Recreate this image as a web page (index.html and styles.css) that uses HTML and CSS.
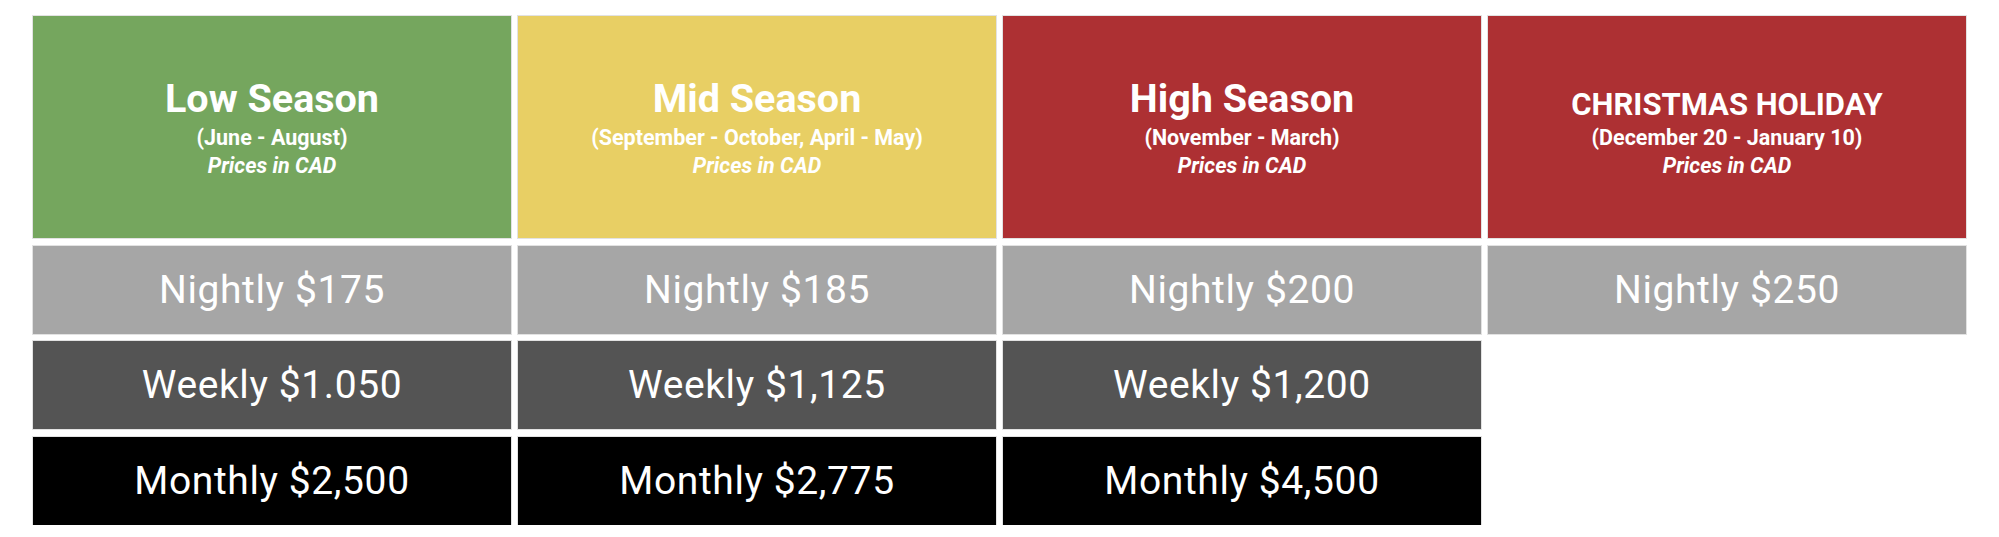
FILE: index.html
```html
<!DOCTYPE html>
<html lang="en">
<head>
<meta charset="utf-8">
<title>Seasonal Rates</title>
<link rel="stylesheet" href="styles.css">
</head>
<body>
<div class="rates">
  <div class="cell head low">
    <div class="title">Low Season</div>
    <div class="sub">(June - August)</div>
    <div class="sub note">Prices in CAD</div>
  </div>
  <div class="cell head mid">
    <div class="title">Mid Season</div>
    <div class="sub">(September - October, April - May)</div>
    <div class="sub note">Prices in CAD</div>
  </div>
  <div class="cell head high">
    <div class="title">High Season</div>
    <div class="sub">(November - March)</div>
    <div class="sub note">Prices in CAD</div>
  </div>
  <div class="cell head high">
    <div class="title caps">CHRISTMAS HOLIDAY</div>
    <div class="sub">(December 20 - January 10)</div>
    <div class="sub note">Prices in CAD</div>
  </div>

  <div class="cell price nightly">Nightly $175</div>
  <div class="cell price nightly">Nightly $185</div>
  <div class="cell price nightly">Nightly $200</div>
  <div class="cell price nightly">Nightly $250</div>

  <div class="cell price weekly">Weekly $1.050</div>
  <div class="cell price weekly">Weekly $1,125</div>
  <div class="cell price weekly">Weekly $1,200</div>
  <div class="empty"></div>

  <div class="cell price monthly">Monthly $2,500</div>
  <div class="cell price monthly">Monthly $2,775</div>
  <div class="cell price monthly">Monthly $4,500</div>
  <div class="empty"></div>
</div>
</body>
</html>
```
FILE: styles.css
```css
html, body {
  margin: 0;
  padding: 0;
  background: #ffffff;
}

body {
  font-family: Roboto, "Liberation Sans", sans-serif;
  color: #ffffff;
}

.rates {
  display: grid;
  grid-template-columns: repeat(4, 478px);
  grid-template-rows: 222px 88px 88px 88px;
  column-gap: 7px;
  row-gap: 7.5px;
  padding: 16px 0 0 33px;
}

.cell {
  box-shadow: 0 0 0 1px rgba(190, 190, 190, 0.45);
}

.head {
  display: flex;
  flex-direction: column;
  align-items: center;
  justify-content: center;
  text-align: center;
}

.low { background: #75a65e; }
.mid { background: #e8cf64; }
.high { background: #ad3033; }

.title {
  font-weight: 700;
  font-size: 39.5px;
  line-height: 50px;
}

.title.caps {
  font-size: 31px;
  line-height: 38px;
  padding-top: 12px;
}

.sub {
  font-weight: 700;
  font-size: 21.5px;
  line-height: 28px;
}

.note {
  font-style: italic;
}

.price {
  display: flex;
  align-items: center;
  justify-content: center;
  font-size: 39px;
  font-weight: 400;
  letter-spacing: 0.6px;
}

.nightly { background: #a6a6a6; }
.weekly { background: #545454; }
.monthly { background: #000000; }
```
